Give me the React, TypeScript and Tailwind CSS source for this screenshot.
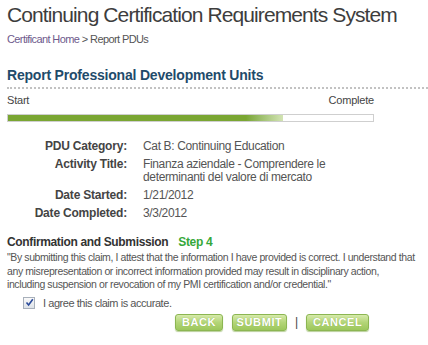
import React from "react";

const details: { label: string; value: string[] }[] = [
  { label: "PDU Category:", value: ["Cat B: Continuing Education"] },
  {
    label: "Activity Title:",
    value: ["Finanza aziendale - Comprendere le", "determinanti del valore di mercato"],
  },
  { label: "Date Started:", value: ["1/21/2012"] },
  { label: "Date Completed:", value: ["3/3/2012"] },
];

const claimLines = [
  "\"By submitting this claim, I attest that the information I have provided is correct. I understand that",
  "any misrepresentation or incorrect information provided may result in disciplinary action,",
  "including suspension or revocation of my PMI certification and/or credential.\"",
];

function GreenButton({ children, width }: { children: React.ReactNode; width: string }) {
  return (
    <button
      className={`flex h-[17px] items-center justify-center rounded-[3px] border border-[#8cb652] bg-gradient-to-b from-[#d6eaaa] via-[#b3d577] to-[#9cc75c] text-[11px] font-bold tracking-[0.6px] text-white shadow-[0_1px_1px_#b9cf9a] [text-shadow:0_0_1px_#86ad48] ${width}`}
    >
      {children}
    </button>
  );
}

export default function App() {
  return (
    <div
      className="h-[345px] w-[428px] overflow-hidden bg-white text-[#555]"
      style={{ fontFamily: '"Liberation Sans", Arial, sans-serif' }}
    >
      {/* header */}
      <div className="px-[7px] pt-[2px]">
        <h1 className="whitespace-nowrap text-[21px] leading-[26px] tracking-[-0.9px] text-[#3d3d3d]">
          Continuing Certification Requirements System
        </h1>
        <div className="mt-[4px] text-[11px] leading-[14px] tracking-[-0.6px]">
          <span className="text-[#6e5a8c]">Certificant Home</span>
          <span className="text-[#555]"> &gt; Report PDUs</span>
        </div>
      </div>

      {/* section title */}
      <div className="mt-[20px] pl-[7px]">
        <h2 className="text-[14px] font-bold leading-[18px] tracking-[-0.2px] text-[#1f4b6b]">
          Report Professional Development Units
        </h2>
        <div className="mt-[3px] border-t-2 border-dotted border-[#c2c2c2]" />
      </div>

      {/* progress */}
      <div className="w-[381px] px-[7px]">
        <div className="mt-[4px] flex justify-between text-[11px] leading-[14px] tracking-[-0.2px] text-[#444]">
          <span>Start</span>
          <span>Complete</span>
        </div>
        <div className="mt-[7px] flex h-[8px] w-full border border-[#cfcfcf] bg-white">
          <div className="h-full w-[238px] bg-[#7aa632]" />
          <div className="h-full w-[37px] bg-gradient-to-r from-[#7aa632] to-[#d3e4b4]" />
        </div>
      </div>

      {/* details */}
      <div className="mt-[18px] flex flex-col gap-[5px] text-[12px] leading-[13px]">
        {details.map((d) => (
          <div key={d.label} className="flex">
            <div className="w-[127px] text-right font-bold tracking-[-0.2px] text-[#444]">{d.label}</div>
            <div className="ml-[16px] tracking-[-0.35px] text-[#555]">
              {d.value.map((v) => (
                <div key={v}>{v}</div>
              ))}
            </div>
          </div>
        ))}
      </div>

      {/* confirmation */}
      <div className="mt-[15px] px-[7px]">
        <div className="text-[12px] font-bold leading-[14px] tracking-[-0.35px] text-[#333]">
          Confirmation and Submission{" "}
          <span className="ml-[7px] tracking-[-0.3px] text-[#36a83a]">Step 4</span>
        </div>
        <div className="mt-[2px] text-[10.5px] leading-[13.5px] tracking-[-0.4px] text-[#555]">
          {claimLines.map((l) => (
            <div key={l} className="whitespace-nowrap">
              {l}
            </div>
          ))}
        </div>
        <div className="mt-[4px] flex items-center pl-[16px]">
          <div className="flex h-[12px] w-[12px] items-center justify-center border border-[#a8b0ba] bg-gradient-to-b from-[#fafafa] to-[#dde2e8]">
            <svg width="9" height="9" viewBox="0 0 9 9">
              <path d="M1.5 4.5 L3.6 7 L7.8 1.2" fill="none" stroke="#2a4a9a" strokeWidth="1.6" />
            </svg>
          </div>
          <span className="ml-[8px] text-[11px] leading-[14px] tracking-[-0.45px] text-[#555]">
            I agree this claim is accurate.
          </span>
        </div>
        <div className="mt-[4px] flex items-center pl-[168px]">
          <GreenButton width="w-[48px]">BACK</GreenButton>
          <div className="w-[9px]" />
          <GreenButton width="w-[55px]">SUBMIT</GreenButton>
          <span className="mx-[8px] text-[12px] leading-[14px] text-[#444]">|</span>
          <GreenButton width="w-[63px]">CANCEL</GreenButton>
        </div>
      </div>
    </div>
  );
}
